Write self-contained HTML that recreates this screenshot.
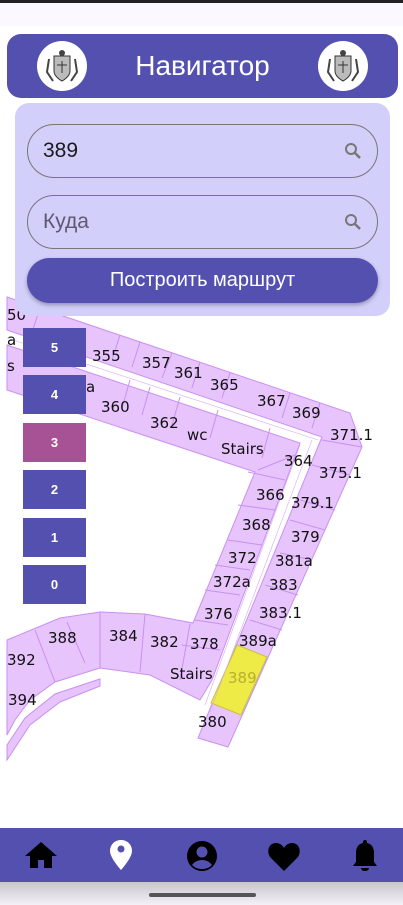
<!DOCTYPE html>
<html><head><meta charset="utf-8">
<style>
*{margin:0;padding:0;box-sizing:border-box}
body{width:403px;height:905px;overflow:hidden;background:#fff;font-family:"Liberation Sans","Noto Sans CJK SC",sans-serif;position:relative}
.abs{position:absolute}
.status{left:0;top:0;width:403px;height:26px;background:#fbf8ff;border-top:3px solid #222}
.header{left:7px;top:34px;width:391px;height:64px;background:#5450b0;border-radius:14px;color:#fff;font-size:28px;text-align:center;line-height:64px;z-index:3}
.logo{width:50px;height:50px;border-radius:50%;background:#fff;top:7px}
.panel{left:15px;top:103px;width:375px;height:213px;background:#d2cffb;border-radius:14px;z-index:3}
.field{left:12px;width:351px;height:54px;border:1px solid #777;border-radius:27px;font-size:21px;line-height:52px;padding-left:15px}
.btn{left:12px;top:155px;width:351px;height:45px;background:#5450b0;border-radius:23px;color:#fff;font-size:20px;text-align:center;line-height:45px;box-shadow:0 2px 4px rgba(0,0,0,.3)}
.fl{left:23px;width:63px;height:39px;background:#5450b0;color:#fff;font-size:13px;font-weight:bold;text-align:center;line-height:39px;z-index:2}
.nav{left:0;top:828px;width:403px;height:54px;background:#5450b0}
.map text{font-family:"DejaVu Sans",sans-serif;font-size:15px;fill:#111}
</style></head><body>
<div class="abs status"></div>
<svg class="abs map" style="left:0;top:0" width="403" height="905">
<g fill="#e8c4fd" stroke="#c890f0" stroke-width="1">
<polygon points="7,297 350,413 362,447 228,747 198,738 322,437 7,330"/>
<polygon points="7,345 300,443 212,680 200,700 150,675 100,668 55,682 30,700 15,720 7,735 7,640 60,618 100,612 145,614 193,623 255,472 7,390"/>
<polygon points="7,760 30,725 60,702 100,686 100,679 55,694 25,718 7,745"/>
</g>
<polygon points="237,645 267,657 241,715 211,703" fill="#eeea46" stroke="#c8c040"/>
<g stroke="#c890f0" stroke-width="1" fill="none">
<line x1="40" y1="308" x2="30" y2="338"/><line x1="120" y1="335" x2="112" y2="360"/><line x1="140" y1="342" x2="132" y2="367"/><line x1="172" y1="353" x2="162" y2="378"/><line x1="200" y1="362" x2="192" y2="388"/><line x1="230" y1="373" x2="222" y2="398"/><line x1="290" y1="393" x2="282" y2="418"/><line x1="320" y1="403" x2="312" y2="428"/>
<line x1="362" y1="447" x2="322" y2="440"/><line x1="350" y1="475" x2="312" y2="465"/><line x1="335" y1="510" x2="300" y2="500"/><line x1="325" y1="530" x2="290" y2="520"/><line x1="312" y1="560" x2="280" y2="553"/><line x1="298" y1="595" x2="265" y2="585"/><line x1="282" y1="630" x2="250" y2="620"/>
<line x1="130" y1="380" x2="122" y2="408"/><line x1="150" y1="387" x2="142" y2="415"/><line x1="180" y1="397" x2="172" y2="425"/><line x1="218" y1="410" x2="210" y2="438"/><line x1="270" y1="428" x2="262" y2="458"/>
<line x1="295" y1="455" x2="258" y2="470"/><line x1="285" y1="480" x2="248" y2="472"/><line x1="275" y1="510" x2="238" y2="505"/><line x1="262" y1="545" x2="228" y2="540"/><line x1="250" y1="570" x2="215" y2="565"/><line x1="240" y1="595" x2="205" y2="590"/><line x1="228" y1="625" x2="195" y2="620"/><line x1="220" y1="650" x2="182" y2="645"/>
<line x1="67" y1="622" x2="85" y2="663"/><line x1="100" y1="612" x2="100" y2="668"/><line x1="145" y1="614" x2="140" y2="672"/><line x1="190" y1="624" x2="180" y2="680"/><line x1="35" y1="630" x2="55" y2="682"/>
</g>
<g stroke="#d8a8f8" stroke-width="0.6" fill="none">
<line x1="7" y1="338" x2="318" y2="440"/><line x1="300" y1="445" x2="205" y2="705"/><line x1="312" y1="440" x2="210" y2="712"/>
</g>
<text x="7" y="320">50</text><text x="7" y="345">a</text><text x="7" y="371">s</text><text x="86" y="392">a</text>
<text x="92" y="361">355</text><text x="142" y="368">357</text><text x="174" y="378">361</text><text x="210" y="390">365</text><text x="257" y="406">367</text><text x="292" y="418">369</text>
<text x="330" y="440">371.1</text><text x="319" y="478">375.1</text><text x="291" y="508">379.1</text><text x="291" y="542">379</text><text x="275" y="566">381a</text><text x="269" y="590">383</text><text x="259" y="618">383.1</text><text x="239" y="646">389a</text>
<text x="228" y="683" style="fill:#b8b030">389</text><text x="198" y="727">380</text>
<text x="101" y="412">360</text><text x="150" y="428">362</text><text x="187" y="440">wc</text><text x="221" y="454">Stairs</text><text x="284" y="466">364</text>
<text x="256" y="500">366</text><text x="242" y="530">368</text><text x="228" y="563">372</text><text x="213" y="587">372a</text><text x="204" y="619">376</text><text x="190" y="649">378</text><text x="170" y="679">Stairs</text>
<text x="48" y="643">388</text><text x="109" y="641">384</text><text x="150" y="647">382</text><text x="7" y="665">392</text><text x="8" y="705">394</text>
</svg>
<div class="abs fl" style="top:328px">5</div>
<div class="abs fl" style="top:375px">4</div>
<div class="abs fl" style="top:423px;background:#a85296">3</div>
<div class="abs fl" style="top:470px">2</div>
<div class="abs fl" style="top:518px">1</div>
<div class="abs fl" style="top:565px">0</div>
<div class="abs header">Навигатор
<div class="abs logo" style="left:30px"><svg width="50" height="50"><path d="M17 15h16v15c0 6-8 10-8 10s-8-4-8-10z" fill="#bbb" stroke="#333"/><circle cx="25" cy="12" r="3" fill="#444"/><path d="M12 18l-2 13 6 9M38 18l2 13-6 9" stroke="#444" stroke-width="2" fill="none"/><path d="M20 24h10M25 20v12" stroke="#333"/></svg></div>
<div class="abs logo" style="left:311px"><svg width="50" height="50"><path d="M17 15h16v15c0 6-8 10-8 10s-8-4-8-10z" fill="#bbb" stroke="#333"/><circle cx="25" cy="12" r="3" fill="#444"/><path d="M12 18l-2 13 6 9M38 18l2 13-6 9" stroke="#444" stroke-width="2" fill="none"/><path d="M20 24h10M25 20v12" stroke="#333"/></svg></div>
</div>
<div class="abs panel">
<div class="abs field" style="top:21px;color:#1a1a1a">389</div>
<div class="abs field" style="top:92px;color:#5d5a70">Куда</div>
<svg class="abs" style="left:329px;top:39px" width="18" height="18"><circle cx="7" cy="7" r="5" stroke="#777" stroke-width="2" fill="none"/><line x1="11" y1="11" x2="16" y2="16" stroke="#777" stroke-width="2.5"/></svg>
<svg class="abs" style="left:329px;top:110px" width="18" height="18"><circle cx="7" cy="7" r="5" stroke="#777" stroke-width="2" fill="none"/><line x1="11" y1="11" x2="16" y2="16" stroke="#777" stroke-width="2.5"/></svg>
<div class="abs btn">Построить маршрут</div>
</div>
<div class="abs nav">
<svg class="abs" style="left:24px;top:12px" width="34" height="30"><path d="M17 2L1 16h5v12h8v-8h6v8h8V16h5z"/></svg>
<svg class="abs" style="left:109px;top:11px" width="24" height="32"><path d="M12 1C5.5 1 1 6 1 12c0 7 11 19 11 19s11-12 11-19C23 6 18.5 1 12 1z" fill="#fff"/><circle cx="12" cy="10" r="3.5" fill="#5450b0"/></svg>
<svg class="abs" style="left:185px;top:11px" width="34" height="34"><circle cx="17" cy="17" r="15" fill="#000"/><circle cx="17" cy="13" r="5.5" fill="#5450b0"/><path d="M7 26c3-4 7-5 10-5s7 1 10 5c-3 3-6 4-10 4s-7-1-10-4z" fill="#5450b0"/></svg>
<svg class="abs" style="left:267px;top:12px" width="34" height="32"><path d="M17 31L4 18C-1 13 1 3 9 3c4 0 7 3 8 5 1-2 4-5 8-5 8 0 10 10 5 15z"/></svg>
<svg class="abs" style="left:350px;top:10px" width="30" height="36"><path d="M15 2c-2 0-2 2-2 3-5 1-7 5-7 10v9l-3 4h24l-3-4v-9c0-5-2-9-7-10 0-1 0-3-2-3z"/><path d="M11 30h8c0 2-2 3-4 3s-4-1-4-3z"/></svg>
</div>
<div class="abs" style="left:0;top:882px;width:403px;height:23px;background:linear-gradient(#c8c5cc,#f4f1f8)"></div>
<div class="abs" style="left:149px;top:893px;width:107px;height:4px;border-radius:2px;background:#555"></div>
</body></html>
